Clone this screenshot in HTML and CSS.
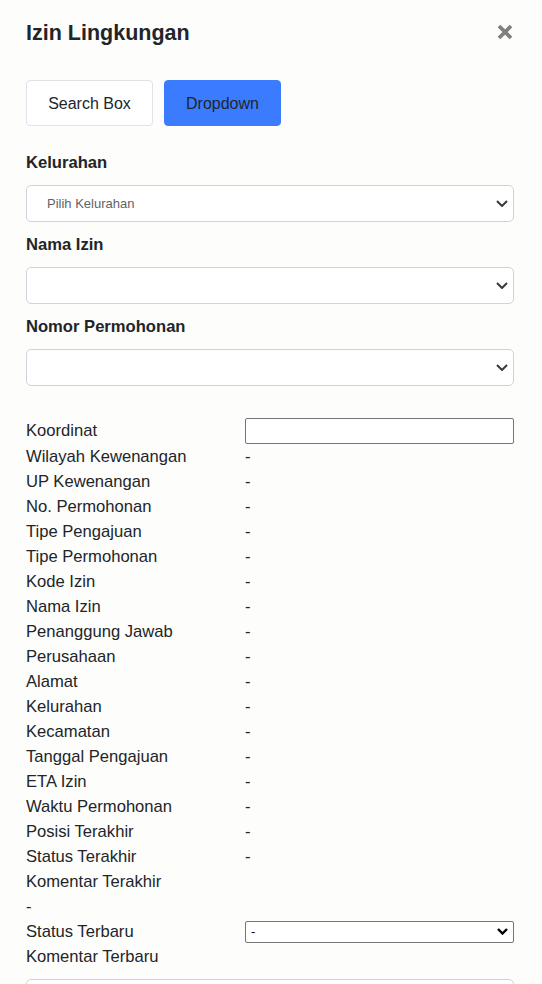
FILE: index.html
```html
<!DOCTYPE html>
<html lang="id">
<head>
<meta charset="utf-8">
<title>Izin Lingkungan</title>
<link rel="stylesheet" href="styles.css">
</head>
<body>
<div class="modal">
  <div class="header">
    <h1 class="title">Izin Lingkungan</h1>
    <svg class="close" width="16" height="16" viewBox="0 0 16 16"><path d="M2 2L14 14M14 2L2 14" stroke="#808080" stroke-width="3.8" stroke-linecap="butt"/></svg>
  </div>
  <div class="tabs">
    <button class="btn btn-light">Search Box</button>
    <button class="btn btn-blue">Dropdown</button>
  </div>
  <div class="field">
    <div class="label">Kelurahan</div>
    <div class="select"><span class="placeholder">Pilih Kelurahan</span><svg class="chev" width="12" height="7" viewBox="0 0 12 7"><path d="M1 1L6 6L11 1" fill="none" stroke="#343a40" stroke-width="2"/></svg></div>
  </div>
  <div class="field">
    <div class="label">Nama Izin</div>
    <div class="select"><span class="placeholder"></span><svg class="chev" width="12" height="7" viewBox="0 0 12 7"><path d="M1 1L6 6L11 1" fill="none" stroke="#343a40" stroke-width="2"/></svg></div>
  </div>
  <div class="field">
    <div class="label">Nomor Permohonan</div>
    <div class="select"><span class="placeholder"></span><svg class="chev" width="12" height="7" viewBox="0 0 12 7"><path d="M1 1L6 6L11 1" fill="none" stroke="#343a40" stroke-width="2"/></svg></div>
  </div>
  <div class="details">
    <div class="row row-first"><span class="key">Koordinat</span><span class="val"><span class="input"></span></span></div>
    <div class="row"><span class="key">Wilayah Kewenangan</span><span class="val">-</span></div>
    <div class="row"><span class="key">UP Kewenangan</span><span class="val">-</span></div>
    <div class="row"><span class="key">No. Permohonan</span><span class="val">-</span></div>
    <div class="row"><span class="key">Tipe Pengajuan</span><span class="val">-</span></div>
    <div class="row"><span class="key">Tipe Permohonan</span><span class="val">-</span></div>
    <div class="row"><span class="key">Kode Izin</span><span class="val">-</span></div>
    <div class="row"><span class="key">Nama Izin</span><span class="val">-</span></div>
    <div class="row"><span class="key">Penanggung Jawab</span><span class="val">-</span></div>
    <div class="row"><span class="key">Perusahaan</span><span class="val">-</span></div>
    <div class="row"><span class="key">Alamat</span><span class="val">-</span></div>
    <div class="row"><span class="key">Kelurahan</span><span class="val">-</span></div>
    <div class="row"><span class="key">Kecamatan</span><span class="val">-</span></div>
    <div class="row"><span class="key">Tanggal Pengajuan</span><span class="val">-</span></div>
    <div class="row"><span class="key">ETA Izin</span><span class="val">-</span></div>
    <div class="row"><span class="key">Waktu Permohonan</span><span class="val">-</span></div>
    <div class="row"><span class="key">Posisi Terakhir</span><span class="val">-</span></div>
    <div class="row"><span class="key">Status Terakhir</span><span class="val">-</span></div>
    <div class="row"><span class="key">Komentar Terakhir</span></div>
    <div class="row"><span class="key">-</span></div>
    <div class="row"><span class="key">Status Terbaru</span><span class="val"><span class="native-select"><span>-</span><svg width="11" height="7" viewBox="0 0 11 7"><path d="M1 1L5.5 5.5L10 1" fill="none" stroke="#000" stroke-width="2.4"/></svg></span></span></div>
    <div class="row"><span class="key">Komentar Terbaru</span></div>
    <div class="textarea"></div>
  </div>
</div>
</body>
</html>
```
FILE: styles.css
```css
* { box-sizing: border-box; }
html, body { margin: 0; padding: 0; }
body {
  background: #fdfdfc;
  font-family: "Liberation Sans", Arial, sans-serif;
  color: #212529;
  font-size: 16.6px;
}
.modal {
  padding: 21px 28px 0 26px;
}
.header {
  display: flex;
  justify-content: space-between;
  align-items: center;
  height: 24px;
}
.title {
  margin: 0;
  font-size: 21.5px;
  font-weight: 700;
  line-height: 24px;
}
.close {
  margin-right: 1px;
  margin-top: -3px;
}
.tabs {
  display: flex;
  gap: 11px;
  margin-top: 35px;
}
.btn {
  font-family: "Liberation Sans", Arial, sans-serif;
  font-size: 16px;
  line-height: 24px;
  height: 46px;
  padding: 11px 20px 9px;
  border-radius: 4px;
  color: #212529;
  cursor: pointer;
}
.btn-light {
  background: #ffffff;
  border: 1px solid #dfe2e6;
  width: 127px;
}
.btn-blue {
  background: #3b7cff;
  border: 1px solid #3b7cff;
  width: 117px;
}
.field {
  margin-top: 24px;
}
.field + .field {
  margin-top: 10px;
}
.label {
  font-weight: 700;
  line-height: 25px;
}
.select {
  margin-top: 10px;
  height: 37px;
  background: #ffffff;
  border: 1px solid #ced4da;
  border-radius: 5px;
  display: flex;
  align-items: center;
  justify-content: space-between;
  padding: 0 5px 0 20px;
}
.placeholder {
  font-size: 13px;
  color: #5f6368;
}
.details {
  margin-top: 31px;
}
.row {
  display: flex;
  line-height: 25px;
  min-height: 25px;
  align-items: center;
}
.key {
  width: 219px;
  flex: none;
}
.val {
  flex: 1;
  display: flex;
}
.row-first {
  height: 27px;
  align-items: flex-start;
  padding-top: 1px;
}
.input {
  display: block;
  width: 100%;
  height: 26px;
  background: #ffffff;
  border: 1px solid #767676;
  border-radius: 2px;
}
.native-select {
  width: 100%;
  height: 22px;
  background: #ffffff;
  border: 1px solid #767676;
  border-radius: 2px;
  display: flex;
  align-items: center;
  justify-content: space-between;
  padding: 0 5px 0 5px;
  font-size: 13px;
  color: #000;
}
.textarea {
  margin-top: 10px;
  height: 60px;
  background: #ffffff;
  border: 1px solid #ced4da;
  border-radius: 5px;
}
```
